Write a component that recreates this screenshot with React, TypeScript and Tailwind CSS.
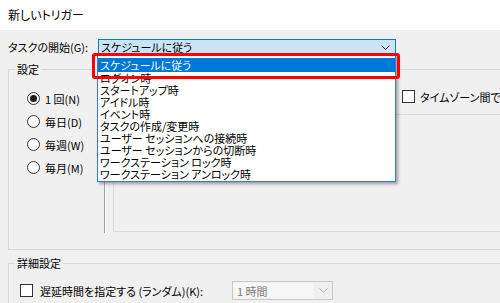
import React from "react";

const triggers = [
  "ログオン時",
  "スタートアップ時",
  "アイドル時",
  "イベント時",
  "タスクの作成/変更時",
  "ユーザー セッションへの接続時",
  "ユーザー セッションからの切断時",
  "ワークステーション ロック時",
  "ワークステーション アンロック時",
];

const Chevron = ({ color = "#333" }: { color?: string }) => (
  <svg width="9" height="5" viewBox="0 0 9 5">
    <polyline points="0.5,0.5 4.5,4.5 8.5,0.5" fill="none" stroke={color} strokeWidth="1" />
  </svg>
);

const Radio = ({ checked, label }: { checked?: boolean; label: string }) => (
  <div className="flex items-center h-[23px] gap-[5px]">
    <span className="w-[13px] h-[13px] rounded-full border border-[#333] bg-white flex items-center justify-center">
      {checked && <span className="w-[7px] h-[7px] rounded-full bg-[#1a1a1a]" />}
    </span>
    <span className="whitespace-nowrap">{label}</span>
  </div>
);

const Checkbox = () => <span className="w-[13px] h-[13px] border border-[#333] bg-white shrink-0" />;

export default function App() {
  return (
    <div className="relative w-[500px] h-[303px] overflow-hidden bg-[#f0f0f0] text-[11px] leading-[14px] text-black font-['Noto_Sans_CJK_JP','Noto_Sans_CJK_SC',sans-serif] [font-feature-settings:'palt']">
      <div className="h-[30px] bg-white flex items-center pl-[8px] text-[12px]">新しいトリガー</div>

      {/* start row */}
      <div className="flex items-center mt-[9px] h-[16px]">
        <div className="w-[98px] pl-[8px] whitespace-nowrap">タスクの開始(G):</div>
        <div className="w-[298px] h-[16px] border border-[#0078d7] bg-[#cce4f7] flex items-center justify-between pl-[2px] pr-[5px]">
          <span>スケジュールに従う</span>
          <Chevron />
        </div>
      </div>

      {/* settings group */}
      <fieldset className="ml-[8px] mt-[7px] w-[520px] h-[188px] border border-[#d9d9d9]">
        <legend className="ml-[6px] px-[2px] leading-[14px]">設定</legend>
        <div className="flex">
          <div className="w-[95px] pl-[18px] pt-[11px]">
            <Radio checked label="1 回(N)" />
            <Radio label="毎日(D)" />
            <Radio label="毎週(W)" />
            <Radio label="毎月(M)" />
          </div>
          <div className="mt-[4px] w-[2px] h-[153px] border-l border-[#a0a0a0] border-r border-r-white" />
          <div className="flex-1 flex flex-col">
            <div className="mt-[14px] pl-[296px] flex items-center gap-[5px] h-[13px]">
              <Checkbox />
              <span className="whitespace-nowrap">タイムゾーン間で同期</span>
            </div>
            <div className="mt-[11px] ml-[7px] h-[118px] border border-[#d9d9d9]" />
          </div>
        </div>
      </fieldset>

      {/* advanced group */}
      <fieldset className="ml-[8px] mt-[6px] w-[520px] h-[80px] border border-[#d9d9d9]">
        <legend className="ml-[6px] px-[2px] leading-[14px]">詳細設定</legend>
        <div className="flex items-center mt-[11px] h-[19px]">
          <div className="w-[223px] pl-[11px] flex items-center gap-[7px]">
            <Checkbox />
            <span className="whitespace-nowrap">遅延時間を指定する (ランダム)(K):</span>
          </div>
          <div className="w-[101px] h-[19px] border border-[#c9c9c9] flex items-center pl-[1px] pr-[4px]">
            <div className="w-[79px] h-[15px] bg-[#f7f7f7] pl-[3px] text-[#7a7a7a] flex items-center">1 時間</div>
            <div className="flex-1 flex justify-end">
              <Chevron color="#b5b5b5" />
            </div>
          </div>
        </div>
      </fieldset>

      {/* dropdown list */}
      <div className="absolute left-[97px] top-[54px] w-[299px] h-[128px] bg-white border border-[#2f7bd4] pt-[3px] shadow-[2px_2px_3px_rgba(0,0,0,0.35)]">
        <div className="h-[14px] bg-[#0078d7] text-white pl-[2px] flex items-center">スケジュールに従う</div>
        {triggers.map((t) => (
          <div key={t} className="h-[12px] leading-[12px] pl-[2px] whitespace-nowrap">
            {t}
          </div>
        ))}
      </div>

      {/* red highlight */}
      <div className="absolute left-[92px] top-[53px] w-[308px] h-[26px] border-[3px] border-[#ff0000] rounded-[3px]" />
    </div>
  );
}
